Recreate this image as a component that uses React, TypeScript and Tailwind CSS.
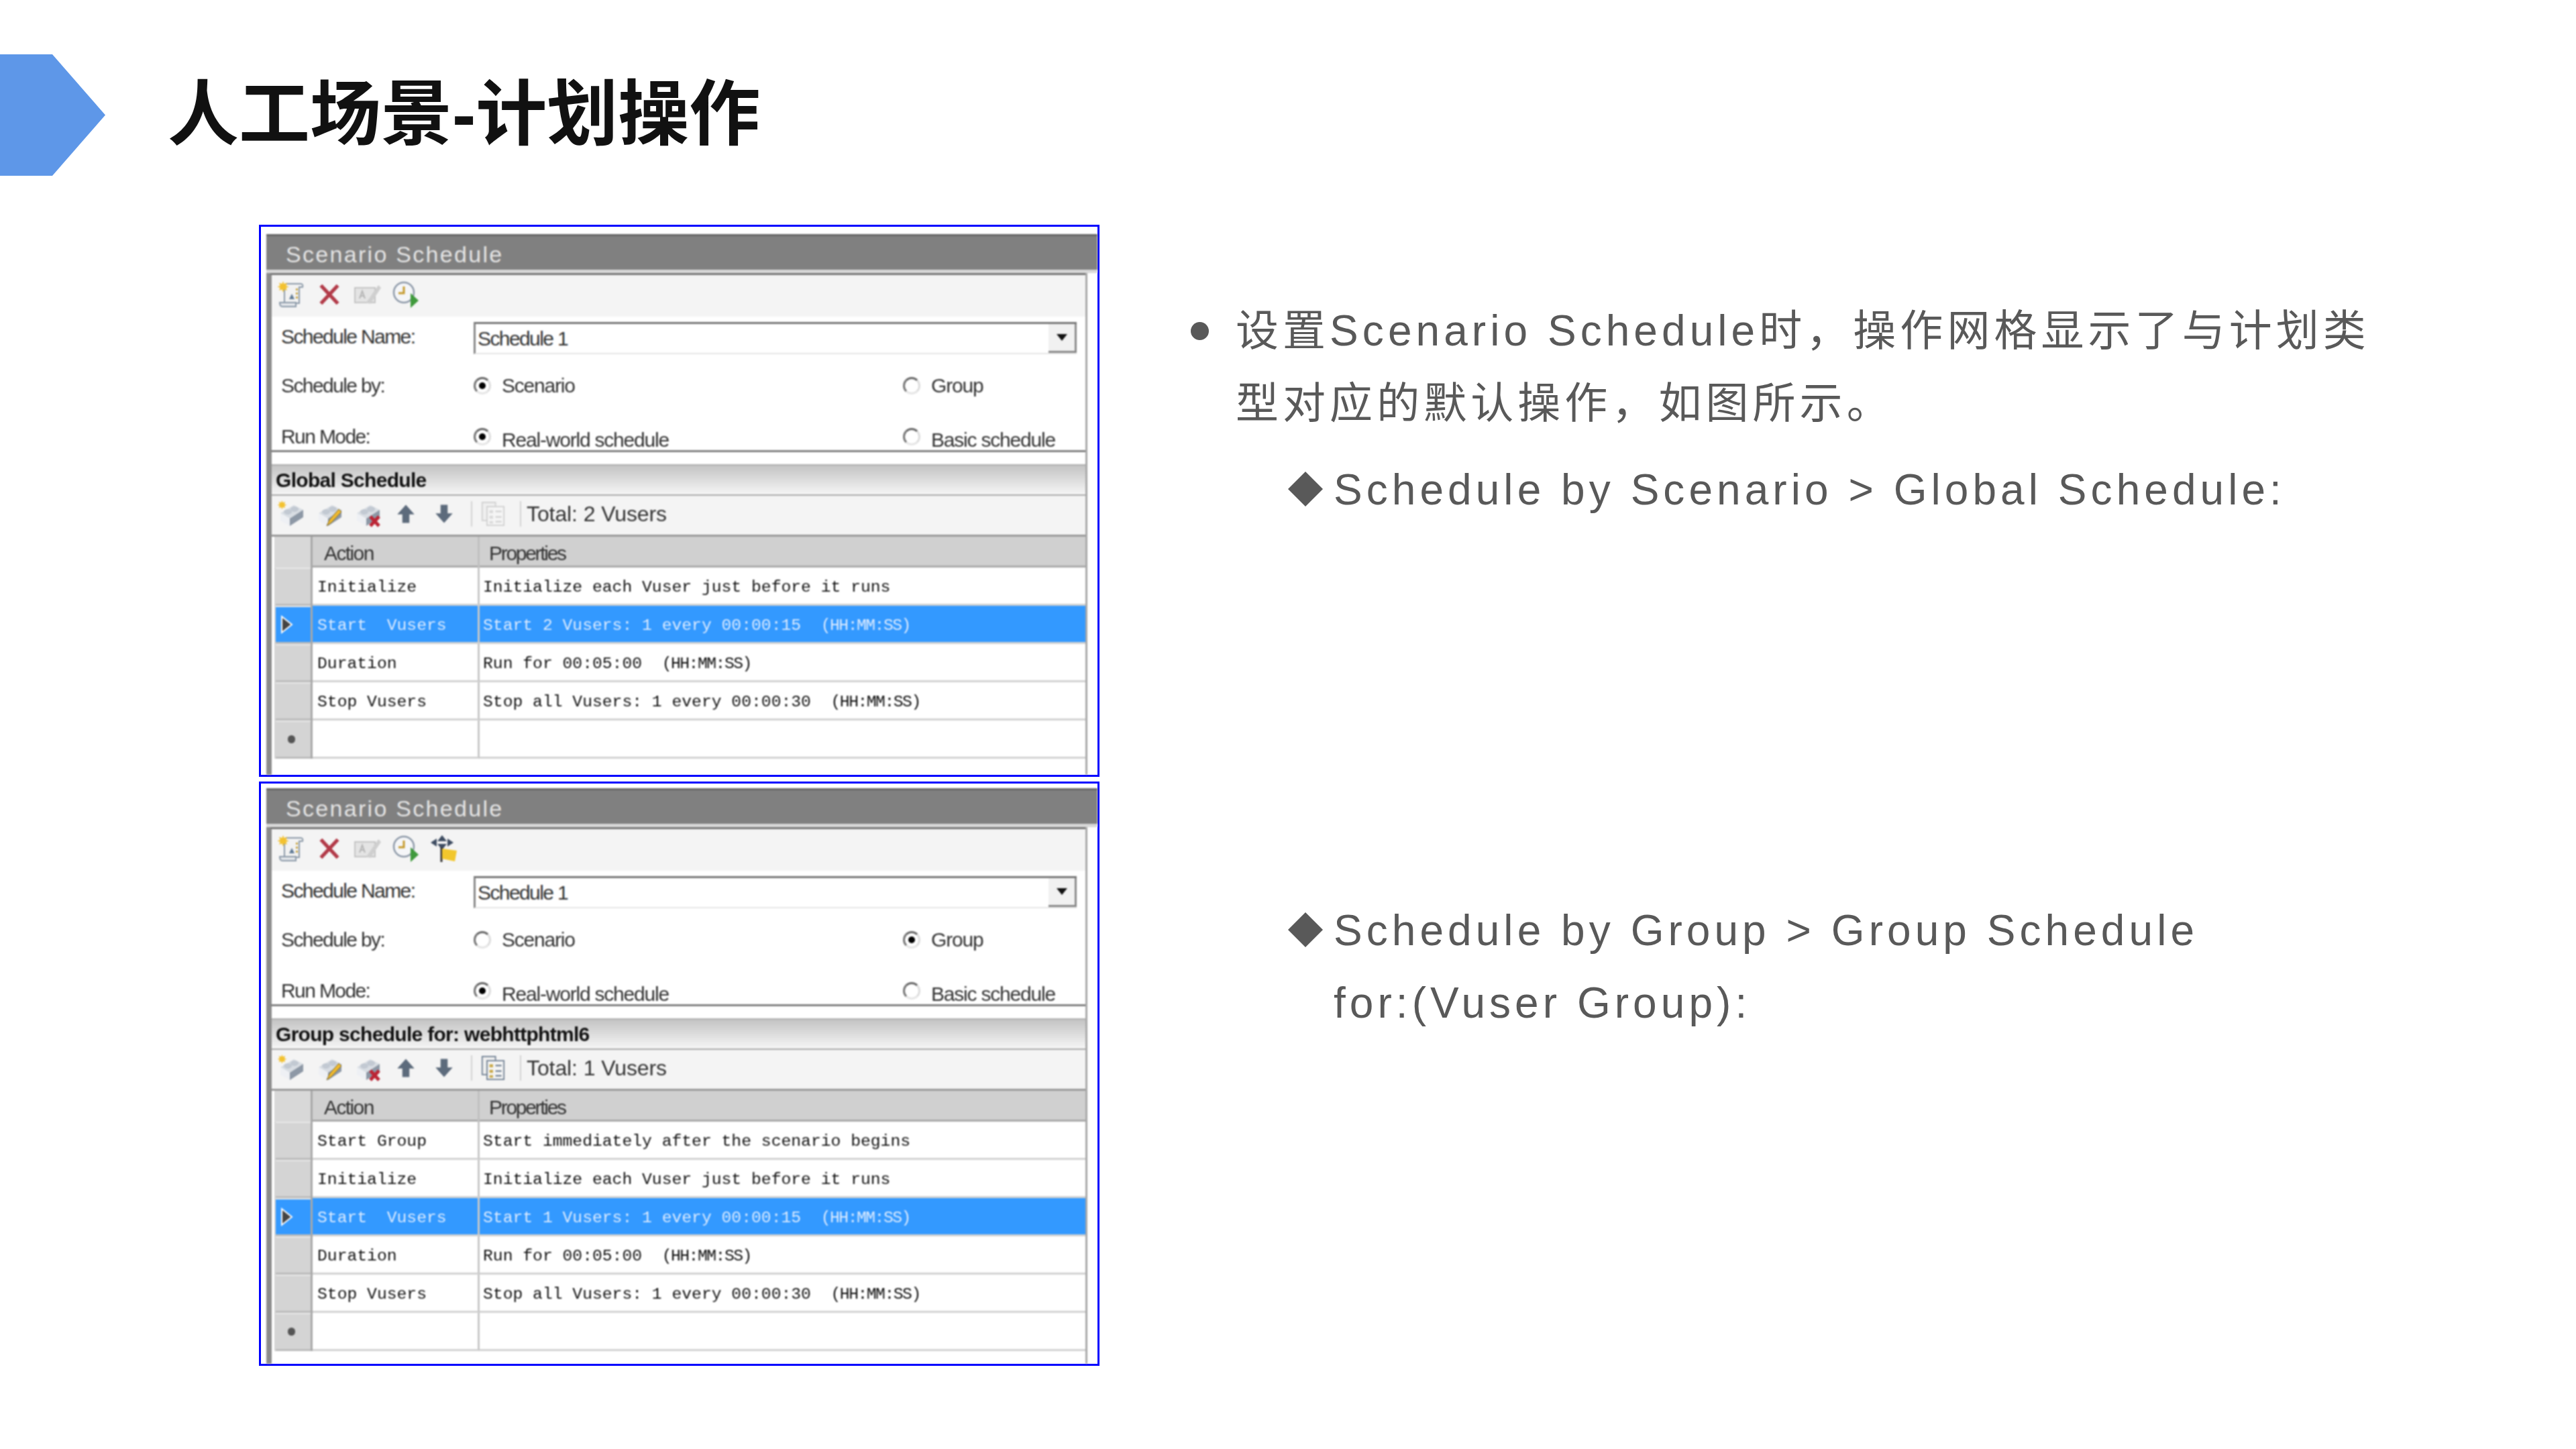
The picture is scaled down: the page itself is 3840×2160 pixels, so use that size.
import React from 'react';

const SANS = 'font-["Liberation_Sans","Noto_Sans_CJK_SC",sans-serif]';

type Row = { hdr?: 'sel' | 'new'; action: string; prop: string; clock?: string };

const Svg: React.FC<{ w?: number; h?: number; children: React.ReactNode }> = ({ w = 40, h = 40, children }) => (
  <svg width={w} height={h} viewBox="0 0 40 40">
    {children}
  </svg>
);

const Sun = () => (
  <g>
    <path d="M8 0l1.6 4.2L14 2.6l-1.6 4.4L17 8.4l-4.6 1.5L14 14l-4.4-1.6L8 17l-1.6-4.6L2 14l1.6-4.1L-1 8.4 3.6 7 2 2.6l4.4 1.6z" fill="#f3c230" />
  </g>
);

const ScrollIcon = () => (
  <Svg>
    <path d="M12 4h22c3 0 4 2 3 5h-5v24H10V8z" fill="#f2f2f2" stroke="#8b99a8" strokeWidth="2" />
    <path d="M3 32h24v6H7c-3 0-4-3-4-6z" fill="#e3e6ea" stroke="#8b99a8" strokeWidth="2" />
    <path d="M27 11h3v3h-3zM27 17h3v3h-3zM27 23h3v3h-3z" fill="#c9a645" />
    <path d="M17 27l4-8 4 8z" fill="#5f7a95" />
    <Sun />
  </Svg>
);

const DeleteIcon = () => (
  <Svg w={36} h={36}>
    <path d="M6 5l28 30M34 5L6 35" stroke="#b23a48" strokeWidth="6" fill="none" />
  </Svg>
);

const RenameIcon = () => (
  <Svg>
    <rect x="1" y="10" width="30" height="22" fill="#e4e4e4" stroke="#c4c4c4" strokeWidth="2" />
    <path d="M8 26l4-11 4 11M10 22h5" stroke="#b5b5b5" strokeWidth="2" fill="none" />
    <path d="M18 32L36 6l4 4-16 24z" fill="#cfcfcf" />
  </Svg>
);

const ClockIcon = () => (
  <Svg>
    <circle cx="17" cy="17" r="15" fill="#f5f6f8" stroke="#8d99a8" strokeWidth="2.5" />
    <path d="M17 8v10h-8" stroke="#c59a2c" strokeWidth="3" fill="none" />
    <path d="M27 18l12 11-12 11z" fill="#3f9a3c" />
  </Svg>
);

const GroupIcon = () => (
  <Svg>
    <path d="M17 0l7 9H10zM17 22l-7-9h14zM0 11l9-6v12zM34 11l-9-6v12z" fill="#3f4d62" />
    <path d="M16 18v22" stroke="#333" strokeWidth="3" />
    <path d="M17 20l22 3-3 16-19-4z" fill="#f2c72c" />
  </Svg>
);

const Brick = () => (
  <g>
    <path d="M4 19L24 7l14 7-20 13z" fill="#d8dde3" />
    <path d="M4 19l14 8v11L4 30z" fill="#eef0f4" />
    <path d="M18 27l20-13v11L18 38z" fill="#8d98a6" />
    <ellipse cx="15" cy="17" rx="6" ry="4" fill="#c2c9d2" />
    <ellipse cx="25" cy="13" rx="6" ry="4" fill="#c2c9d2" />
  </g>
);

const BrickNew = () => (
  <Svg>
    <Brick />
    <g transform="scale(0.8)">
      <Sun />
    </g>
  </Svg>
);

const BrickEdit = () => (
  <Svg>
    <Brick />
    <path d="M16 38l4-9 14-16 4 4-15 16z" fill="#f0b92d" stroke="#7a6a35" strokeWidth="1" />
  </Svg>
);

const BrickDelete = () => (
  <Svg>
    <Brick />
    <path d="M24 24l13 14M37 24L24 38" stroke="#bc2535" strokeWidth="5" fill="none" />
  </Svg>
);

const ArrowUp = () => (
  <Svg w={30} h={36}>
    <path d="M20 2l17 19H27v17H13V21H3z" fill="#5d6b7c" />
  </Svg>
);

const ArrowDown = () => (
  <Svg w={30} h={36}>
    <path d="M20 38L3 19h10V2h14v17h10z" fill="#5d6b7c" />
  </Svg>
);

const FormIcon: React.FC<{ active: boolean }> = ({ active }) => {
  const line = active ? '#6f7f92' : '#d0d0d0';
  const fill = active ? '#c9a94a' : '#dadada';
  return (
    <Svg w={36} h={40}>
      <rect x="2" y="1" width="22" height="30" fill="#efefef" stroke={line} strokeWidth="2" />
      <rect x="10" y="8" width="28" height="31" fill="#f5f5f5" stroke={line} strokeWidth="2" />
      <path d="M14 14h6v5h-6zM14 23h6v5h-6zM14 32h6v4h-6z" fill={fill} />
      <path d="M24 16h10M24 25h10M24 33h10" stroke={line} strokeWidth="2.5" />
    </Svg>
  );
};

const ToolSlot: React.FC<{ children: React.ReactNode }> = ({ children }) => (
  <div className="w-[57px] flex justify-center items-center">{children}</div>
);

const Radio: React.FC<{ on?: boolean }> = ({ on }) => (
  <span className="w-[26px] h-[26px] rounded-full border-[3px] border-t-[#666666] border-l-[#777777] border-r-[#dddddd] border-b-[#e6e6e6] flex items-center justify-center shrink-0">
    {on && <span className="w-[10px] h-[10px] rounded-full bg-black" />}
  </span>
);

const RadioLabel: React.FC<{ on?: boolean; text: string; drop?: boolean }> = ({ on, text, drop }) => (
  <div className="flex items-center gap-[16px]">
    <Radio on={on} />
    <span className={`tracking-[-1.2px] ${drop ? 'translate-y-[5px]' : ''}`}>{text}</span>
  </div>
);

const FormRow: React.FC<{ label: string; height: string; lift?: boolean; children: React.ReactNode }> = ({ label, height, lift, children }) => (
  <div className={`grid grid-cols-[301px_640px_1fr] items-center ${height}`}>
    <span className={`pl-[14px] tracking-[-1.6px] ${lift ? '-translate-y-[3px]' : ''}`}>{label}</span>
    {children}
  </div>
);

const GridRow: React.FC<{ row: Row }> = ({ row }) => {
  const sel = row.hdr === 'sel';
  const text = sel ? 'text-[#dcebff]' : 'text-[#111111]';
  const cell = `h-full flex items-center pt-[6px] whitespace-pre border-b-[3px] border-[#d2d2d2] ${sel ? 'bg-[#3399ff]' : 'bg-white'} ${text}`;
  return (
    <div className="grid grid-cols-[57px_249px_1fr] h-[57px]">
      <div className="h-full border-r-[3px] border-[#a8a8a8] pl-[2px] bg-[#d4d4d4]">
        <div className={`h-full flex items-center border-t-[2px] border-b-[3px] border-t-[#e8e8e8] border-b-[#bcbcbc] ${sel ? 'bg-[#3399ff]' : ''}`}>
          {sel && (
            <svg width="22" height="30" viewBox="0 0 22 30" className="ml-[6px]">
              <path d="M3 3l15 12L3 27z" fill="#444444" stroke="#ffffff" strokeWidth="2" />
            </svg>
          )}
          {row.hdr === 'new' && <span className="ml-[18px] w-[11px] h-[12px] rounded-full bg-[#555555]" />}
        </div>
      </div>
      <div className={`${cell} pl-[7px] border-r-[3px] border-r-[#c8c8c8]`}>{row.action}</div>
      <div className={`${cell} pl-[5px]`}>
        {row.prop}
        {row.clock && <span className="tracking-[-1.5px]">{row.clock}</span>}
        {row.clock && <span>)</span>}
      </div>
    </div>
  );
};

const Schedule: React.FC<{
  height: string;
  top: string;
  byGroup?: boolean;
  heading: string;
  total: string;
  rows: Row[];
}> = ({ height, top, byGroup, heading, total, rows }) => (
  <div className={`border-[3px] border-[#0000ff] w-[1253px] bg-white ${height}`}>
    <div className={`h-full flex flex-col blur-[0.8px] text-[30px] text-[#333333] ${SANS} ${top}`}>
      <div className="ml-[8px] h-[53px] bg-[#808080] border-t-[3px] border-[#666666] pl-[29px] pt-[4px] flex items-center text-[34px] tracking-[2.3px] text-[#e4e4e4]">
        Scenario Schedule
      </div>
      <div className="ml-[8px] h-[5px] bg-[#d8d8d8]" />
      <div className="flex-1 flex flex-col ml-[8px] mr-[15px] border-l-[8px] border-r-[3px] border-l-[#8c8c8c] border-r-[#a8a8a8]">
        <div className="h-[3px] -ml-[2px] bg-[#777777]" />
        <div className="h-[62px] bg-[#f4f4f4] pb-[4px] flex items-center">
          <ToolSlot><ScrollIcon /></ToolSlot>
          <ToolSlot><DeleteIcon /></ToolSlot>
          <ToolSlot><RenameIcon /></ToolSlot>
          <ToolSlot><ClockIcon /></ToolSlot>
          {byGroup && <ToolSlot><GroupIcon /></ToolSlot>}
        </div>
        <div className="h-[199px] bg-white pt-[8px]">
          <FormRow label="Schedule Name:" height="h-[48px]" lift>
            <div className="col-span-2 mr-[13px] h-[48px] border-t-[3px] border-l-[3px] border-t-[#777777] border-l-[#888888] border-b-[2px] border-b-[#e6e6e6] flex items-center justify-between">
              <span className="pl-[3px] tracking-[-1.6px]">Schedule 1</span>
              <span className="w-[42px] h-full bg-[#f1f1f1] border-r-[3px] border-b-[3px] border-[#8a8a8a] flex items-center justify-center">
                <svg width="18" height="12" viewBox="0 0 18 12">
                  <path d="M1 1h16L9 11z" fill="#111111" />
                </svg>
              </span>
            </div>
          </FormRow>
          <FormRow label="Schedule by:" height="h-[40px] mt-[24px]">
            <RadioLabel on={!byGroup} text="Scenario" />
            <RadioLabel on={byGroup} text="Group" />
          </FormRow>
          <FormRow label="Run Mode:" height="h-[40px] mt-[36px]">
            <RadioLabel on text="Real-world schedule" drop />
            <RadioLabel text="Basic schedule" drop />
          </FormRow>
        </div>
        <div className="h-[3px] -ml-[2px] bg-[#808080]" />
        <div className="h-[18px] bg-white" />
        <div className="h-[45px] pl-[6px] flex items-center font-bold tracking-[-0.7px] text-[#111111] border-t-[2px] border-[#b0b0b0] bg-gradient-to-b from-[#c4c4c4] to-[#f6f6f6]">
          {heading}
        </div>
        <div className="h-[2px] bg-[#a8a8a8]" />
        <div className="h-[58px] bg-[#f4f4f4] pb-[4px] flex items-center">
          <ToolSlot><BrickNew /></ToolSlot>
          <ToolSlot><BrickEdit /></ToolSlot>
          <ToolSlot><BrickDelete /></ToolSlot>
          <ToolSlot><ArrowUp /></ToolSlot>
          <ToolSlot><ArrowDown /></ToolSlot>
          <span className="ml-[12px] w-[2px] h-[38px] bg-[#d4d4d4]" />
          <span className="ml-[13px]"><FormIcon active={!!byGroup} /></span>
          <span className="ml-[22px] w-[2px] h-[38px] bg-[#d4d4d4]" />
          <span className="ml-[8px] text-[32px] tracking-[-0.1px]">{total}</span>
        </div>
        <div className="h-[3px] bg-[#999999]" />
        <div className="pl-[4px] flex-1 flex flex-col">
          <div className="grid grid-cols-[57px_249px_1fr] h-[46px] bg-[#d0d0d0] border-b-[3px] border-[#aaaaaa]">
            <div className="border-r-[3px] border-[#a8a8a8] bg-[#d8d8d8]" />
            <div className="pl-[17px] pt-[2px] tracking-[-1.6px] border-r-[3px] border-[#c0c0c0]">Action</div>
            <div className="pl-[14px] pt-[2px] tracking-[-2.3px]">Properties</div>
          </div>
          <div className={`font-["Liberation_Mono",monospace] text-[24.7px]`}>
            {rows.map((row, i) => (
              <GridRow key={i} row={row} />
            ))}
          </div>
        </div>
      </div>
    </div>
  </div>
);

const globalRows: Row[] = [
  { action: 'Initialize', prop: 'Initialize each Vuser just before it runs' },
  { hdr: 'sel', action: 'Start  Vusers', prop: 'Start 2 Vusers: 1 every 00:00:15  ', clock: '(HH:MM:SS' },
  { action: 'Duration', prop: 'Run for 00:05:00  ', clock: '(HH:MM:SS' },
  { action: 'Stop Vusers', prop: 'Stop all Vusers: 1 every 00:00:30  ', clock: '(HH:MM:SS' },
  { hdr: 'new', action: '', prop: '' },
];

const groupRows: Row[] = [
  { action: 'Start Group', prop: 'Start immediately after the scenario begins' },
  { action: 'Initialize', prop: 'Initialize each Vuser just before it runs' },
  { hdr: 'sel', action: 'Start  Vusers', prop: 'Start 1 Vusers: 1 every 00:00:15  ', clock: '(HH:MM:SS' },
  { action: 'Duration', prop: 'Run for 00:05:00  ', clock: '(HH:MM:SS' },
  { action: 'Stop Vusers', prop: 'Stop all Vusers: 1 every 00:00:30  ', clock: '(HH:MM:SS' },
  { hdr: 'new', action: '', prop: '' },
];

const Diamond = () => (
  <svg width="52" height="52" viewBox="0 0 52 52" className="shrink-0 absolute -left-[68px] top-[27px]">
    <path d="M26 0l26 26-26 26L0 26z" fill="#595959" />
  </svg>
);

export default function App() {
  return (
    <div className={`w-[3840px] h-[2160px] bg-white overflow-hidden ${SANS}`}>
      <header className="h-[335px] pt-[81px] flex items-start">
        <div className="w-[157px] h-[181px] bg-[#5e97e8] [clip-path:polygon(0_0,78px_0,100%_50%,78px_100%,0_100%)]" />
        <h1 className="ml-[93px] mt-[22px] text-[106px] leading-[134px] font-bold text-[#111111]">人工场景-计划操作</h1>
      </header>
      <main className="flex pl-[386px]">
        <div className="flex flex-col gap-[7px]">
          <Schedule height="h-[823px]" top="pt-[11px]" heading="Global Schedule" total="Total: 2 Vusers" rows={globalRows} />
          <Schedule height="h-[871px]" top="pt-[7px]" byGroup heading="Group schedule for: webhttphtml6" total="Total: 1 Vusers" rows={groupRows} />
        </div>
        <div className="ml-[203px] pt-[104px] text-[64px] leading-[108px] tracking-[6.05px] text-[#595959]">
          <p className="relative w-[1720px]">
            <span className="absolute -left-[67px] top-[41px] w-[27px] h-[27px] rounded-full bg-[#595959]" />
            设置Scenario Schedule时，操作网格显示了与计划类型对应的默认操作，如图所示。
          </p>
          <p className="relative ml-[146px] mt-[21px]">
            <Diamond />
            Schedule by Scenario &gt; Global Schedule:
          </p>
          <p className="relative ml-[146px] mt-[549px] w-[1400px]">
            <Diamond />
            Schedule by Group &gt; Group Schedule for:(Vuser Group):
          </p>
        </div>
      </main>
    </div>
  );
}
